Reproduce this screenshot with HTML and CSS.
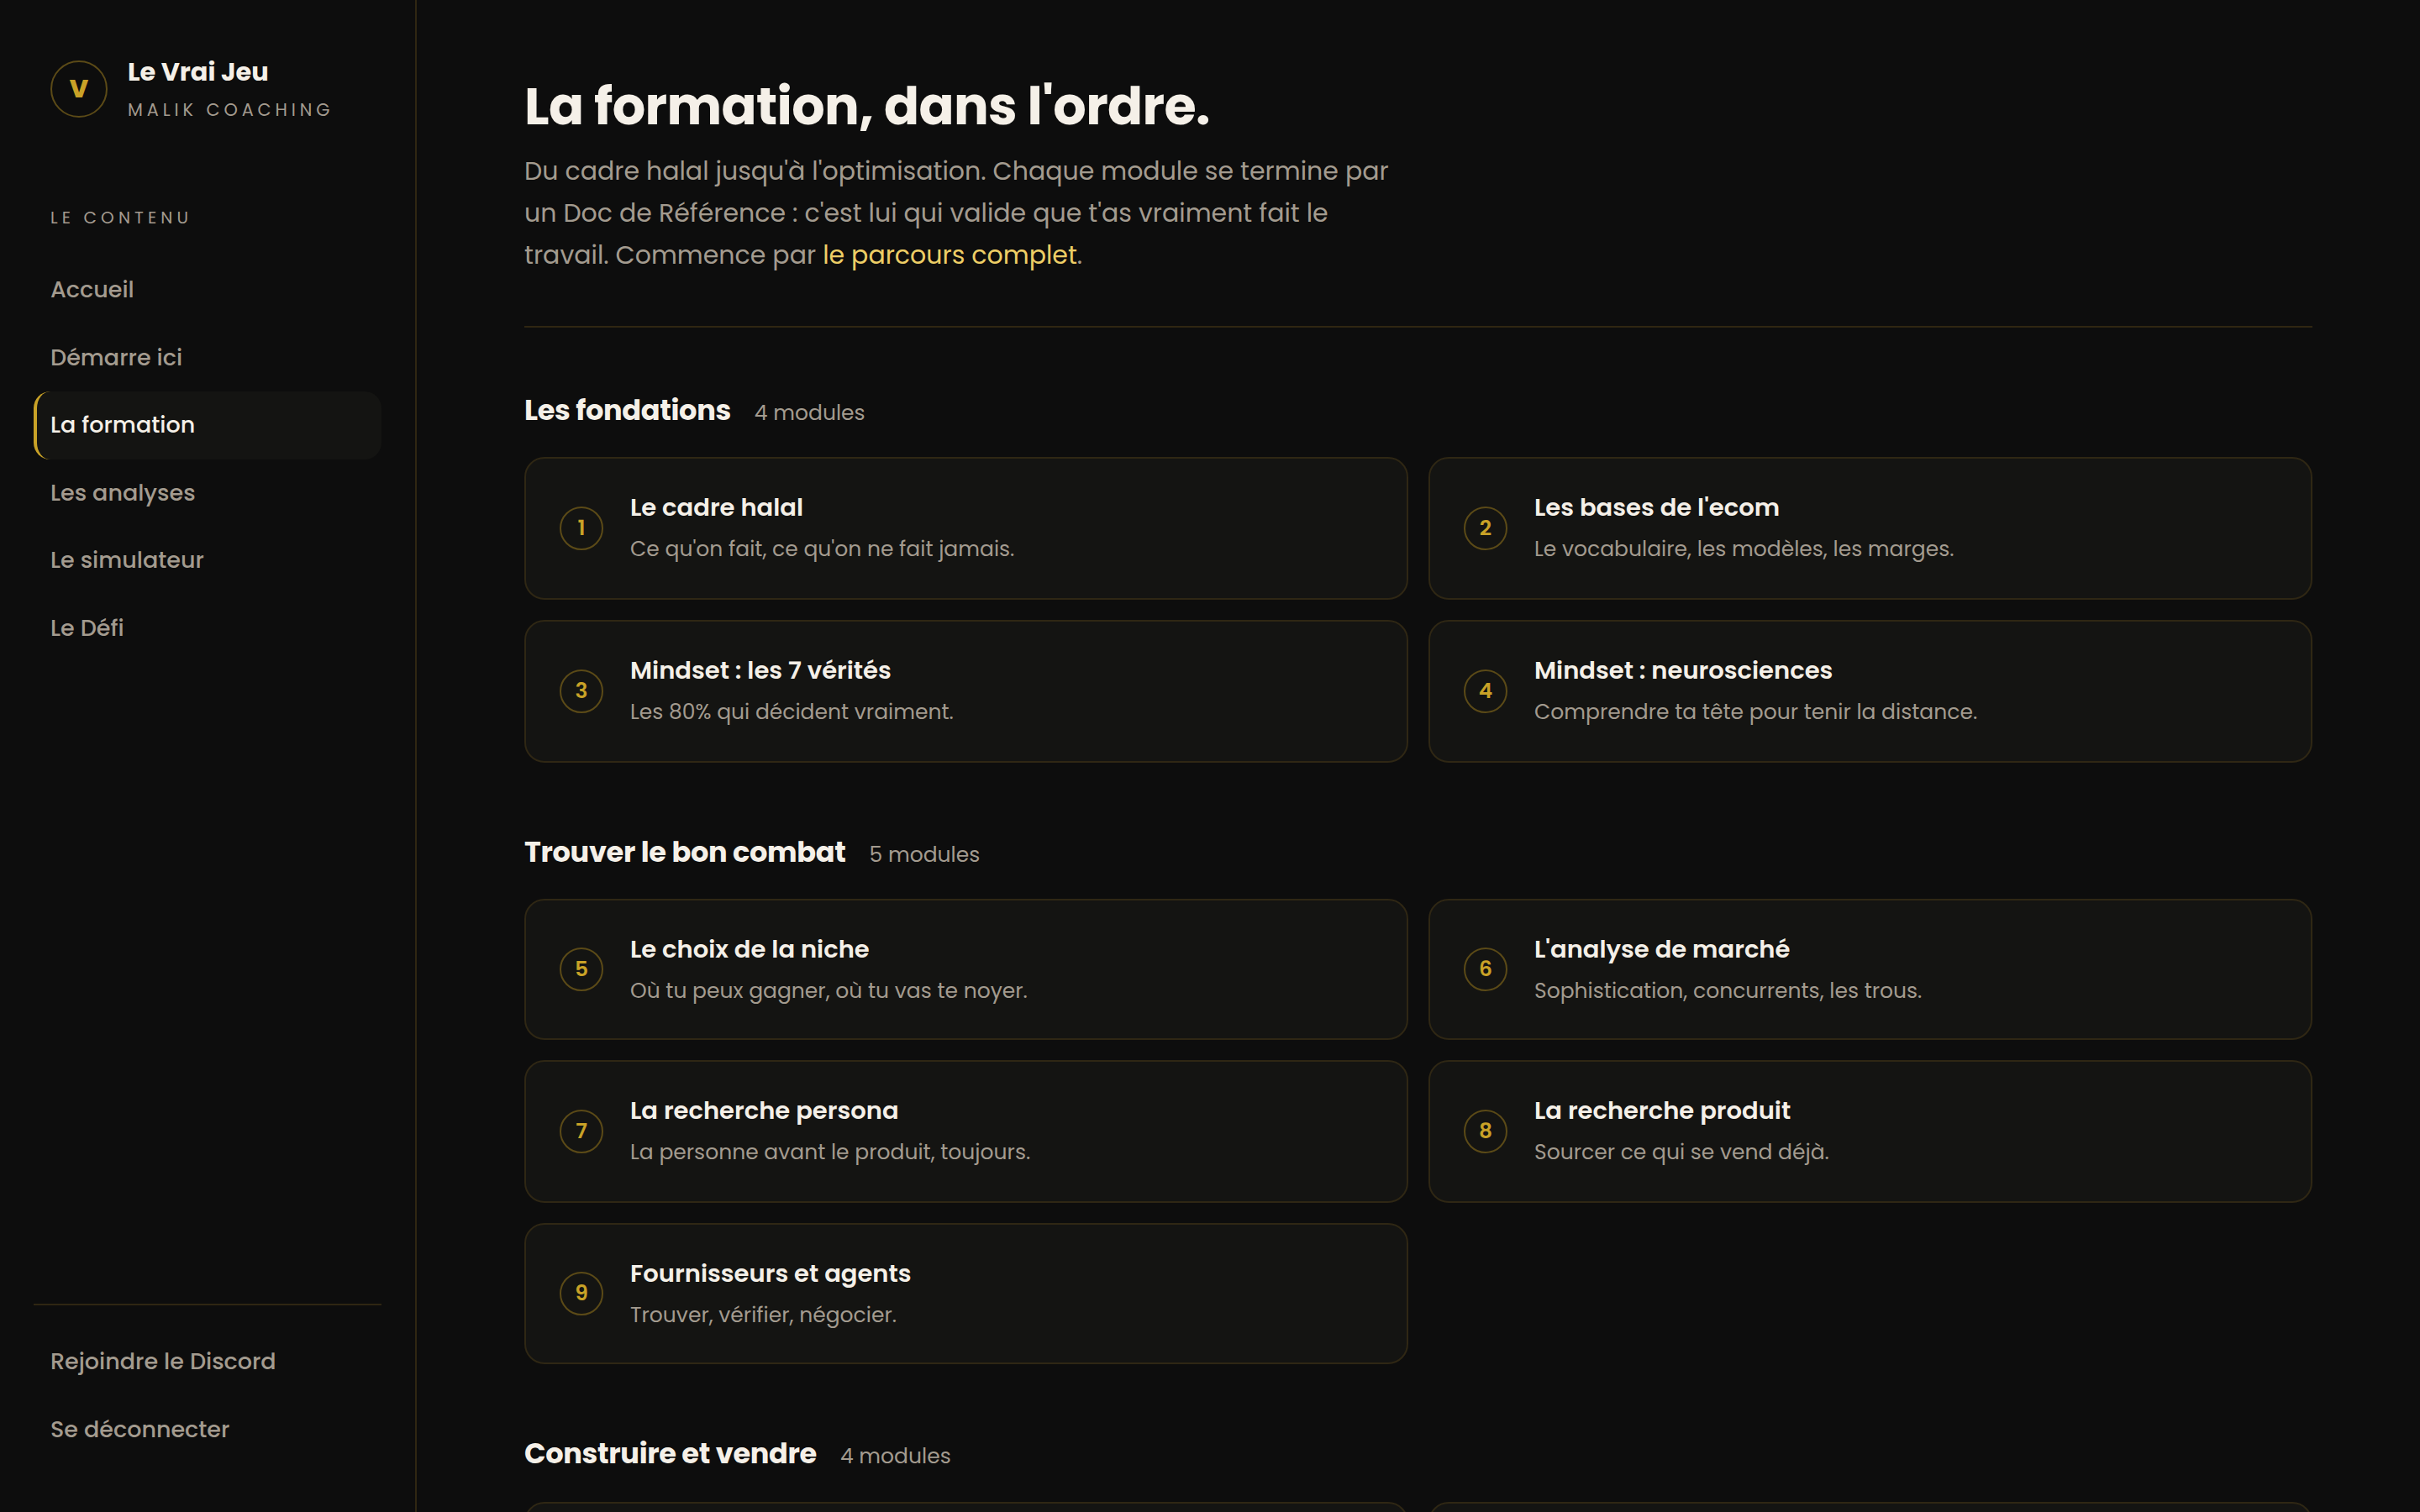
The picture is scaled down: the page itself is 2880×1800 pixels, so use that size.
FILE: index.html
```html
<!DOCTYPE html>
<html lang="fr">
<head>
  <meta charset="UTF-8" />
  <meta name="viewport" content="width=device-width, initial-scale=1.0" />
  <title>La formation - Le Vrai Jeu</title>
  <link rel="stylesheet" href="styles.css">
</head>
<body>
  <aside class="sidebar">
    <div class="brand">
      <div class="brand-mark">V</div>
      <div>
        <div class="brand-name">Le Vrai Jeu</div>
        <div class="brand-sub">MALIK COACHING</div>
      </div>
    </div>
    <div class="nav-label">LE CONTENU</div>
    <nav class="nav">
      <a>Accueil</a>
      <a>Démarre ici</a>
      <a class="active">La formation</a>
      <a>Les analyses</a>
      <a>Le simulateur</a>
      <a>Le Défi</a>
    </nav>
    <div class="nav sidebar-foot">
      <a>Rejoindre le Discord</a>
      <a>Se déconnecter</a>
    </div>
  </aside>

  <main class="main">
    <header class="page-head">
      <h1>La formation, dans l'ordre.</h1>
      <p>Du cadre halal jusqu'à l'optimisation. Chaque module se termine par un Doc de Référence : c'est lui qui valide que t'as vraiment fait le travail. Commence par <a class="link">le parcours complet</a>.</p>
    </header>

    <section>
      <div class="section-head"><h2>Les fondations</h2><span class="count">4 modules</span></div>
      <div class="grid">
        <a class="card"><span class="num">1</span><div class="card-text"><h3>Le cadre halal</h3><p>Ce qu'on fait, ce qu'on ne fait jamais.</p></div></a>
        <a class="card"><span class="num">2</span><div class="card-text"><h3>Les bases de l'ecom</h3><p>Le vocabulaire, les modèles, les marges.</p></div></a>
        <a class="card"><span class="num">3</span><div class="card-text"><h3>Mindset : les 7 vérités</h3><p>Les 80% qui décident vraiment.</p></div></a>
        <a class="card"><span class="num">4</span><div class="card-text"><h3>Mindset : neurosciences</h3><p>Comprendre ta tête pour tenir la distance.</p></div></a>
      </div>
    </section>

    <section>
      <div class="section-head"><h2>Trouver le bon combat</h2><span class="count">5 modules</span></div>
      <div class="grid grid-3">
        <a class="card"><span class="num">5</span><div class="card-text"><h3>Le choix de la niche</h3><p>Où tu peux gagner, où tu vas te noyer.</p></div></a>
        <a class="card"><span class="num">6</span><div class="card-text"><h3>L'analyse de marché</h3><p>Sophistication, concurrents, les trous.</p></div></a>
        <a class="card"><span class="num">7</span><div class="card-text"><h3>La recherche persona</h3><p>La personne avant le produit, toujours.</p></div></a>
        <a class="card"><span class="num">8</span><div class="card-text"><h3>La recherche produit</h3><p>Sourcer ce qui se vend déjà.</p></div></a>
        <a class="card"><span class="num">9</span><div class="card-text"><h3>Fournisseurs et agents</h3><p>Trouver, vérifier, négocier.</p></div></a>
      </div>
    </section>

    <section>
      <div class="section-head"><h2>Construire et vendre</h2><span class="count">4 modules</span></div>
      <div class="grid">
        <a class="card"></a>
        <a class="card"></a>
      </div>
    </section>
  </main>
</body>
</html>
```
FILE: styles.css
```css
* {
  box-sizing: border-box;
  margin: 0;
  padding: 0;
}
body {
  display: flex;
  height: 100vh;
  overflow: hidden;
  background: #0d0d0d;
  color: #f5f0e8;
  font-family: Poppins, Inter, sans-serif;
}
.sidebar {
  display: flex;
  flex-direction: column;
  width: 496px;
  padding: 64px 40px 58px;
  border-right: 2px solid #2f2612;
}
.brand {
  display: flex;
  align-items: center;
  gap: 24px;
  height: 84px;
  padding: 0 20px;
}
.brand-mark {
  display: flex;
  align-items: center;
  justify-content: center;
  width: 68px;
  height: 68px;
  border: 2px solid #5b4a17;
  border-radius: 50%;
  color: #c9a227;
  font-size: 30px;
  font-weight: 800;
}
.brand-name {
  margin-top: 3px;
  font-size: 30.4px;
  font-weight: 700;
  line-height: 42px;
}
.brand-sub {
  margin-top: 5px;
  color: #a39b8f;
  font-size: 20.8px;
  line-height: 38px;
  letter-spacing: 4.9px;
}
.nav-label {
  margin: 93px 0 28px;
  padding: 0 20px;
  color: #a39b8f;
  font-size: 20px;
  line-height: 36px;
  letter-spacing: 5.1px;
}
.nav a {
  display: flex;
  align-items: center;
  height: 80.5px;
  padding-left: 16px;
  border-left: 4px solid transparent;
  border-radius: 20px;
  color: #a39b8f;
  font-size: 27px;
  font-weight: 500;
}
.nav a.active {
  border-left-color: #c9a227;
  background: #141412;
  color: #f5f0e8;
}
.sidebar-foot {
  margin-top: auto;
  padding-top: 27px;
  border-top: 2px solid #2f2612;
}
.main {
  flex: 1;
  padding: 89px 128px 0;
}
.page-head {
  height: 301px;
  border-bottom: 2px solid #2f2612;
}
h1 {
  font-size: 62px;
  font-weight: 700;
  line-height: 76px;
  letter-spacing: -0.01em;
}
.page-head p {
  width: 1050px;
  margin-top: 14px;
  color: #a39b8f;
  font-size: 30px;
  line-height: 50px;
}
.link {
  color: #edce66;
}
section {
  padding-top: 82px;
}
.page-head + section {
  padding-top: 74px;
}
.section-head {
  display: flex;
  align-items: baseline;
  gap: 28px;
  height: 80px;
}
section:last-child .section-head {
  height: 82px;
}
h2 {
  font-size: 33.6px;
  font-weight: 700;
  line-height: 50px;
  letter-spacing: -0.01em;
}
.count {
  color: #a39b8f;
  font-size: 25px;
}
.grid {
  display: grid;
  grid-template-columns: 1fr 1fr;
  grid-auto-rows: 170px;
  gap: 24px;
}
.grid-3 {
  grid-template-rows: 168px 170px 168px;
}
.card {
  display: flex;
  align-items: center;
  gap: 32px;
  padding: 0 40px;
  border: 2px solid #2f2714;
  border-radius: 24px;
  background: #141412;
}
.num {
  display: flex;
  align-items: center;
  justify-content: center;
  width: 52px;
  height: 52px;
  border: 2px solid #5b4a17;
  border-radius: 50%;
  color: #c9a227;
  font-size: 25px;
  font-weight: 600;
}
.card-text {
  align-self: flex-start;
  margin-top: 35px;
}
h3 {
  font-size: 29px;
  font-weight: 600;
  line-height: 46px;
}
.card p {
  margin-top: 5px;
  color: #a39b8f;
  font-size: 25px;
  line-height: 44px;
}
```
